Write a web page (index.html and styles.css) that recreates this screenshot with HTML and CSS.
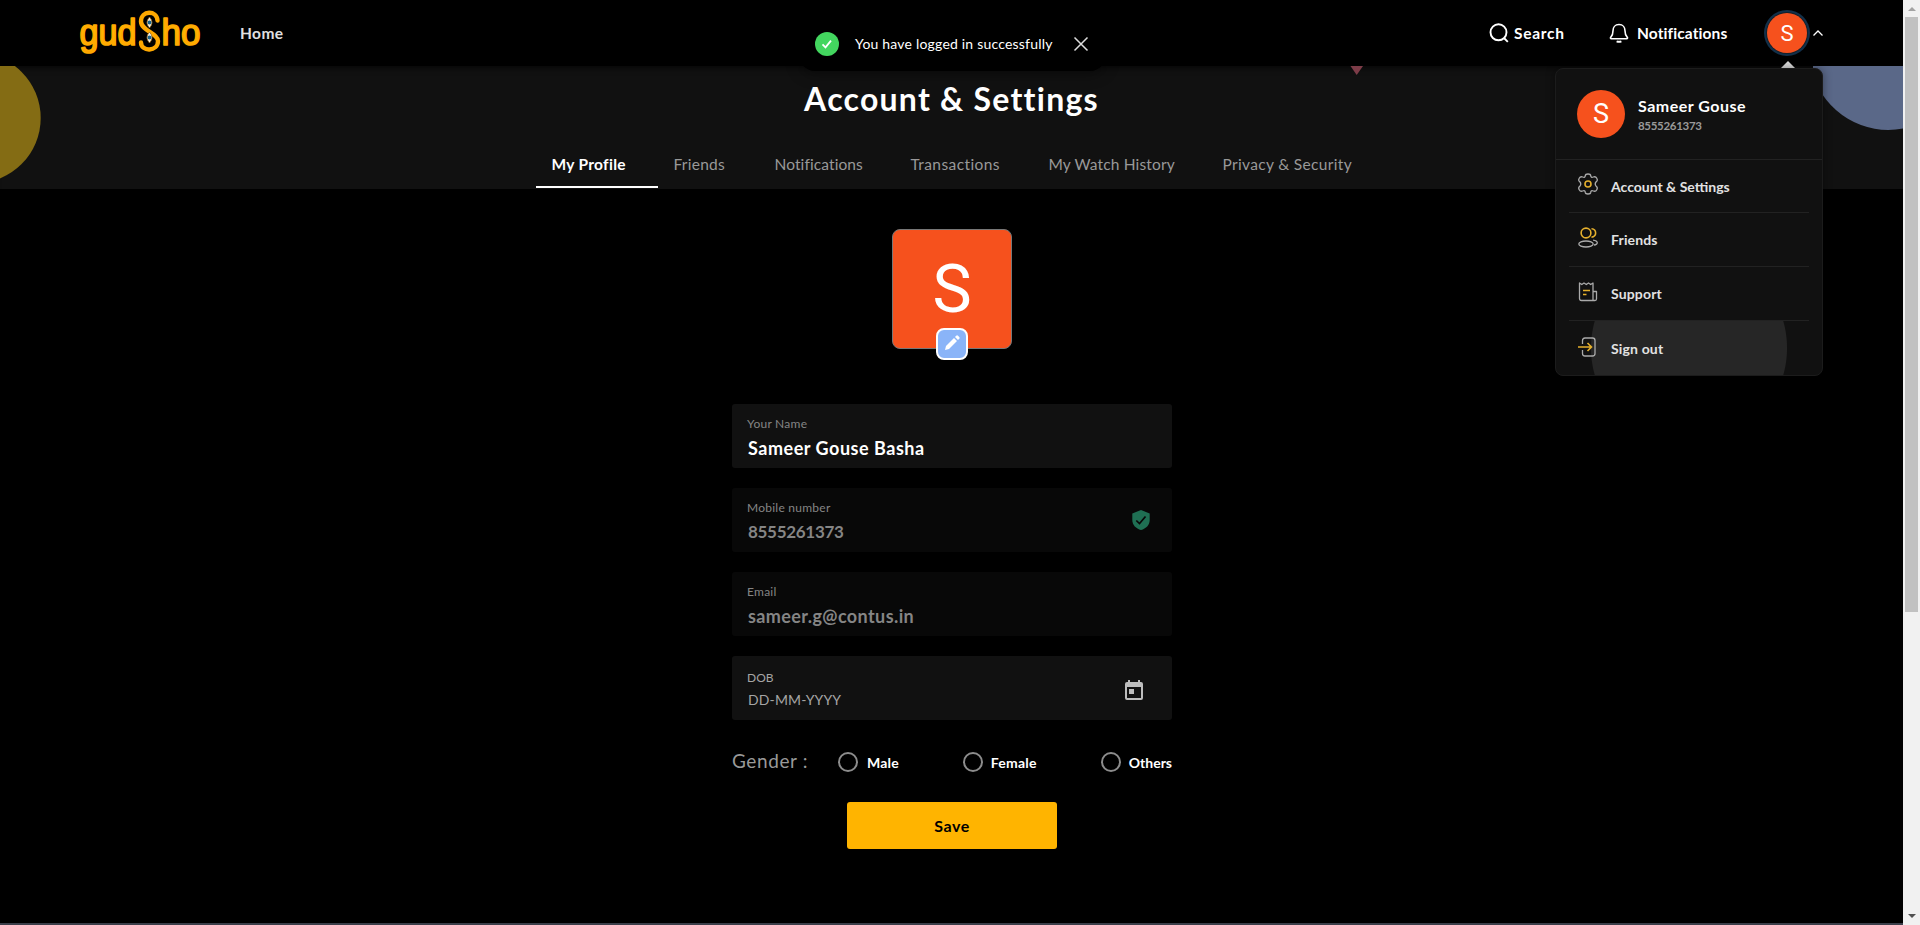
FILE: index.html
```html
<!DOCTYPE html>
<html lang="en">
<head>
<meta charset="utf-8">
<title>gudSho - Account &amp; Settings</title>
<link rel="stylesheet" href="styles.css">
</head>
<body>
<div class="page">
  <header class="topbar">
    <svg class="logo" width="122" height="50" viewBox="0 0 122 50">
      <defs><linearGradient id="gold" x1="0" y1="0" x2="0" y2="1"><stop offset="0" stop-color="#ff9d00"/><stop offset=".5" stop-color="#ffb800"/><stop offset="1" stop-color="#ffa200"/></linearGradient></defs>
      <text class="logo-text" x="-0.500" y="37" textLength="57" lengthAdjust="spacingAndGlyphs">gud</text>
      <text class="logo-text" x="81.500" y="37" textLength="39" lengthAdjust="spacingAndGlyphs">ho</text>
      <path d="M77.500 12.500C77 2 61 2 61 13.500c0 9 17 12 17 19.500 0 11-17 11-17 1.500" fill="none" stroke="#ffa900" stroke-width="4.400" stroke-linecap="round"/>
      <path d="M69.500 9q5 5.500 0 11-5-5.500 0-11zM69.500 24q5 5.500 0 11-5-5.500 0-11z" fill="#f3f0e6" stroke="#9a6a1c" stroke-width=".8"/>
      <circle cx="69.500" cy="14.500" r="1.900" fill="#1b6388"/><circle cx="69.500" cy="29.500" r="1.900" fill="#1b6388"/>
    </svg>
    <a class="home">Home</a>
    <div class="actions">
      <a class="action search"><svg width="20" height="20" viewBox="0 0 20 20" fill="none" stroke="#fff" stroke-width="1.900"><circle cx="9.500" cy="9.300" r="8"/><path d="M15 15l3.800 3.800"/></svg><span>Search</span></a>
      <a class="action bell"><svg width="20" height="20" viewBox="0 0 20 20" fill="none" stroke="#fff" stroke-width="1.600" stroke-linejoin="round"><path d="M10 1.500c-4 0-6 3-6 6.200 0 4.300-1.200 5.600-2.300 6.700-.5.500-.2 1.300.5 1.300h15.600c.7 0 1-.8.500-1.300C17.200 13.300 16 12 16 7.700c0-3.200-2-6.200-6-6.200z"/><path d="M7.600 18.300q2.400 1 4.800 0" stroke-width="2"/></svg><span>Notifications</span></a>
      <span class="avatar small">S</span>
      <svg class="chev" width="12" height="8" viewBox="0 0 12 8" fill="none" stroke="#fff" stroke-width="1.300"><path d="M1.500 6.500L6 2l4.500 4.500"/></svg>
    </div>
  </header>

  <section class="hero">
    <svg class="shapes" width="1903" height="123" viewBox="0 66 1903 123">
      <circle cx="-24.500" cy="118" r="65.200" fill="#846c14"/>
      <path d="M1813 66V75A79 79 0 0 0 1903 128.500V66z" fill="#5a6888"/>
      <path d="M1350.500 66h12.500l-6.300 9z" fill="#7d3c48"/>
    </svg>
    <h1>Account &amp; Settings</h1>
    <nav class="tabs">
      <a class="tab t1 on">My Profile</a><a class="tab t2">Friends</a><a class="tab t3">Notifications</a><a class="tab t4">Transactions</a><a class="tab t5">My Watch History</a><a class="tab t6">Privacy &amp; Security</a>
    </nav>
  </section>

  <main class="profile">
    <div class="photo">S
      <span class="edit"><svg width="16" height="16" viewBox="0 0 16 16" fill="#fff"><path d="M1 15l1-4 8-8 3 3-8 8zM11 2l1.200-1.200q.9-.9 1.800 0l1.200 1.200q.9.900 0 1.800L14 5z"/></svg></span>
    </div>
    <div class="field"><div><label>Your Name</label><p class="value name">Sameer Gouse Basha</p></div></div>
    <div class="field off"><div><label>Mobile number</label><p class="value num">8555261373</p></div>
      <svg class="shield" width="18" height="20" viewBox="0 0 18 20"><path d="M9 0l8.700 3.500V10c0 5-3.700 8.700-8.700 10C4 18.700.3 15 .3 10V3.500z" fill="#1f6f53"/><path d="M4.300 10.500l3.200 3L13.500 6.500" fill="none" stroke="#080808" stroke-width="1.700"/></svg></div>
    <div class="field off"><div><label>Email</label><p class="value mail">sameer.g@contus.in</p></div></div>
    <div class="field dob"><div><label>DOB</label><p class="hint">DD-MM-YYYY</p></div>
      <svg class="cal" width="18" height="20" viewBox="0 0 18 20"><path d="M2 2h1V0h2v2h8V0h2v2h1q2 0 2 2v14q0 2-2 2H2q-2 0-2-2V4q0-2 2-2zM2 7v11h14V7zM4 9h5v5H4z" fill="#bdbdbd" fill-rule="evenodd"/></svg></div>
    <div class="gender"><span class="glabel">Gender :</span><span class="opt male"><i></i><b>Male</b></span><span class="opt female"><i></i><b>Female</b></span><span class="opt others"><i></i><b>Others</b></span></div>
    <button class="save">Save</button>
  </main>
</div>

<aside class="scroll"><i class="up"></i><span class="thumb"></span><i class="down"></i></aside>
<div class="edge"></div>

<div class="toast">
  <svg width="24" height="24" viewBox="0 0 24 24"><circle cx="12" cy="12" r="12" fill="#43d65f"/><path d="M7.500 12.300l3 3 5.500-6.600" fill="none" stroke="#fff" stroke-width="1.800"/></svg>
  <span>You have logged in successfully</span>
  <svg width="16" height="16" viewBox="0 0 16 16"><path d="M1.500 1.500l13 13M14.500 1.500l-13 13" stroke="#ddd" stroke-width="1.500"/></svg>
</div>

<div class="pointer"></div>
<div class="menu">
  <div class="who"><span class="avatar big">S</span><div><strong>Sameer Gouse</strong><small>8555261373</small></div></div>
  <ul>
    <li><svg width="20" height="22" viewBox="0 0 20 22" fill="none" stroke="#aaa" stroke-width="1.300" stroke-linejoin="round"><path d="M7.300 2.600Q7.500 1 10 1t2.700 1.600q.2 2.400 2.600 1.400c1.700-.7 2.700-.2 3.500 1.300.9 1.600.8 2.500-.6 3.500q-2 2.200 0 4.400c1.400 1 1.500 1.900.6 3.500-.8 1.500-1.800 2-3.500 1.300q-2.400-1-2.600 1.400Q12.500 21 10 21t-2.700-1.600Q7.100 17 4.700 18c-1.700.7-2.700.2-3.500-1.300-.9-1.600-.8-2.500.6-3.500q2-2.200 0-4.400C.4 7.800.3 6.900 1.200 5.300 2 3.800 3 3.300 4.700 4q2.400 1 2.600-1.400z"/><circle cx="10" cy="11" r="3" stroke="#e5b02d" stroke-width="1.600"/></svg><span>Account &amp; Settings</span></li>
    <li><svg width="20" height="22" viewBox="0 0 20 22" fill="none" stroke="#aaa" stroke-width="1.300"><g stroke="#e5b02d" stroke-width="1.600"><circle cx="8" cy="6" r="4.900"/><path d="M13.500 1.700c5.500-.2 5.500 8.600 0 8.400"/></g><ellipse cx="8" cy="17" rx="7.200" ry="3"/><path d="M15 13.200c5.500.7 5.500 4.300 1 4.800"/></svg><span class="m3">Friends</span></li>
    <li><svg width="20" height="22" viewBox="0 0 20 22" fill="none" stroke="#aaa" stroke-width="1.300" stroke-linejoin="round"><path d="M15 19.500H3.500q-2 0-2-2V2l2.300 1.500L6 2l2.300 1.500L10.500 2l2.200 1.500L15 2zM15 10.500h3.500v7.500q0 1.500-1.500 1.500h-2"/><path d="M5 9.500h7M5 13.500h3.500" stroke="#e5b02d" stroke-width="1.500"/></svg><span class="m3">Support</span></li>
    <li class="out"><svg width="20" height="22" viewBox="0 0 20 22" fill="none" stroke="#aaa" stroke-width="1.300"><path d="M4.500 8V4.500Q4.500 2 7 2h7.500Q17 2 17 4.500v13q0 2.500-2.500 2.500H7q-2.500 0-2.500-2.500V14"/><path d="M0 11h13M9.500 7l4 4-4 4" stroke="#e5b02d" stroke-width="1.600"/></svg><span class="m3">Sign out</span></li>
  </ul>
</div>
</body>
</html>
```
FILE: styles.css
```css
* { box-sizing: border-box; }
body { margin: 0; width: 1920px; height: 925px; overflow: hidden; background: #000; color: #fff; font-family: Lato, "Open Sans", sans-serif; white-space: nowrap; }
.page { width: 1903px; height: 925px; }
h1, p, ul { margin: 0; padding: 0; }

.topbar { height: 66px; display: flex; align-items: center; padding: 0 80px; background: #000; }
.logo { margin-top: -1px; overflow: visible; }
.logo-text { font: 36px "Liberation Sans", Arial, sans-serif; fill: url(#gold); stroke: #ffaa00; stroke-width: 1.700px; stroke-linejoin: round; }
.home { margin-left: 38px; font-size: 15.500px; font-weight: 700; letter-spacing: .4px; color: #e0e0e0; margin-top: -1px; }
.actions { margin-left: auto; display: flex; align-items: center; }
.action { display: flex; align-items: center; font-size: 15.500px; font-weight: 700; }
.action span { margin-top: -1px; }
.search { width: 120px; gap: 5px; letter-spacing: .7px; }
.bell { width: 158px; gap: 8px; letter-spacing: .1px; }
.avatar { display: flex; align-items: center; justify-content: center; border-radius: 50%; background: #f6511d; font-family: Roboto, sans-serif; }
.small { width: 40px; height: 40px; font-size: 22px; box-shadow: 0 0 0 1px #15202a, 0 0 0 3px #12304a; }
.chev { margin: 0 -1px 0 5px; }

.hero { position: relative; height: 123px; background: #111; box-shadow: inset 0 8px 8px -8px #000; text-align: center; display: flex; flex-direction: column; align-items: center; }
.shapes { position: absolute; left: 0; top: 0; }
h1 { font-size: 32px; line-height: 40px; margin-top: 13px; font-weight: 700; letter-spacing: 1.250px; position: relative; }
.tabs { margin-top: auto; display: flex; width: 832px; height: 46px; position: relative; }
.tab { flex: none; padding-left: 16px; text-align: left; font-size: 15.500px; line-height: 42px; height: 45px; color: #999; }
.on { color: #fff; font-weight: 700; border-bottom: 2px solid #fff; }
.t1 { width: 122px; letter-spacing: .300px; }
.t2 { width: 101px; letter-spacing: .250px; }
.t3 { width: 136px; letter-spacing: .100px; }
.t4 { width: 138px; letter-spacing: .400px; }
.t5 { width: 174px; letter-spacing: .150px; }
.t6 { width: 161px; letter-spacing: .330px; }

.profile { width: 440px; margin: 40px auto 0; display: flex; flex-direction: column; position: relative; left: .5px; }
.photo { position: relative; align-self: center; width: 120px; height: 120px; margin-bottom: 55px; border: 1px solid #777; border-radius: 8px; background: #f6511d; font: 66px/120px Roboto, sans-serif; text-align: center; }
.edit { position: absolute; left: 43px; top: 98px; width: 32px; height: 32px; border: 2px solid #fff; border-radius: 8px; background: #8ab4f8; display: flex; align-items: center; justify-content: center; }
.edit svg { margin-top: -3px; }
.field { height: 64px; margin-bottom: 20px; border-radius: 3px; background: #111; padding: 12px 22px 0 15px; display: flex; justify-content: space-between; }
.off { background: #080808; color: #858585; }
label { display: block; font-size: 12px; line-height: 16px; letter-spacing: .25px; color: #858585; }
.value { font-size: 18px; line-height: 24px; margin-top: 4px; padding-left: 1px; font-weight: 700; }
.name { letter-spacing: .52px; }
.num { font-size: 17px; letter-spacing: -.3px; }
.mail { letter-spacing: .4px; }
.dob { padding-top: 14px; padding-right: 29px; }
.dob label, .hint { color: #a5a5a5; }
.dob label { letter-spacing: 0; }
.hint { font-size: 14px; line-height: 20px; margin-top: 4px; padding-left: 1px; letter-spacing: .15px; }
.shield { margin-top: 10px; }
.cal { margin-top: 10px; }
.gender { display: flex; align-items: center; height: 24px; margin-top: 10px; }
.glabel { width: 106px; font-size: 19px; letter-spacing: .6px; color: #999; margin-top: -3px; }
.opt { display: flex; align-items: center; gap: 8px; font-size: 14px; }
.opt i { width: 20px; height: 20px; border: 2px solid #8c8c8c; border-radius: 50%; }
.male { width: 125px; gap: 9px; letter-spacing: .2px; }
.female { width: 138px; letter-spacing: .2px; }
.save { align-self: center; width: 210px; height: 47px; margin-top: 28px; border: 0; border-radius: 3px; background: #ffb400; font: 700 16px Lato, sans-serif; letter-spacing: .6px; color: #000; }

.scroll { position: absolute; left: 1903px; top: 0; width: 17px; height: 925px; background: #f1f1f1; display: flex; flex-direction: column; align-items: center; }
.thumb { width: 13px; height: 595px; margin-top: 6px; background: #c1c1c1; }
.up, .down { border: 4px solid transparent; }
.up { margin-top: 3px; border-bottom-color: #a3a3a3; }
.down { margin: auto 0 3px; border-top-color: #505050; }
.edge { position: absolute; left: 0; top: 923px; width: 1903px; height: 2px; background: #3b3f4a; }

.toast { position: absolute; left: 799px; top: 16px; width: 307px; height: 55px; padding: 0 17px 0 16px; border-radius: 0 0 16px 16px; background: #000; display: flex; align-items: center; font-size: 14px; box-shadow: 0 4px 14px rgba(0,0,0,.35); }
.toast span { margin-left: 16px; width: 218px; letter-spacing: .2px; }

.pointer { position: absolute; left: 1781px; top: 61px; border: solid transparent; border-width: 0 7px 7px; border-bottom-color: #ddd; }
.menu { position: absolute; left: 1555px; top: 68px; width: 268px; height: 308px; border: 1px solid #1c1c1c; border-radius: 8px; background: #111; overflow: hidden; box-shadow: 0 0 10px rgba(0,0,0,.4); }
.who { display: flex; align-items: center; gap: 13px; height: 91px; padding: 0 21px; border-bottom: 1px solid #222; }
.big { width: 48px; height: 48px; font-size: 27px; }
.who strong { display: block; font-size: 16px; line-height: 22px; letter-spacing: .5px; margin-top: 2px; }
.who small { display: block; font-size: 11.500px; line-height: 18px; letter-spacing: -.3px; font-weight: 700; color: #999; }
.menu ul { list-style: none; padding: 0 13px; }
.menu li { height: 54px; padding-left: 9px; display: flex; align-items: center; gap: 13px; font-size: 14px; font-weight: 700; color: #e2e2e2; border-bottom: 1px solid #222; }
.menu li:first-child { height: 53px; }
.menu li svg { margin-top: -4px; }
.menu li:last-child { height: 55px; border: 0; }
.m3 { letter-spacing: .15px; }
.out { background: radial-gradient(circle at 120px 27px, #262626 97.500px, transparent 98.500px); }
```
